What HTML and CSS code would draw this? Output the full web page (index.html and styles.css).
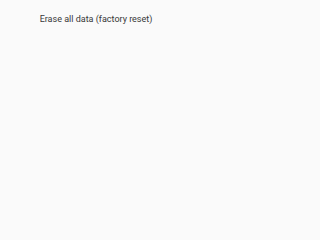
FILE: index.html
```html
<!DOCTYPE html>
<html>
<head>
<meta charset="utf-8">
<link rel="stylesheet" href="styles.css">
</head>
<body>
<div class="screen">
  <h1 class="title">Erase all data (factory reset)</h1>
</div>
</body>
</html>
```

FILE: styles.css
```css
html, body {
  margin: 0;
  padding: 0;
  background: #fafafa;
}
.screen {
  width: 200px;
  height: 200px;
  box-sizing: border-box;
  padding-right: 8px;
  background: #fafafa;
  display: flex;
  flex-direction: column;
  align-items: center;
}
.title {
  margin: 0;
  padding-top: 13px;
  font-family: Roboto, "Noto Sans", sans-serif;
  font-weight: 400;
  font-size: 9px;
  line-height: 12px;
  color: #383838;
  white-space: nowrap;
}
```
